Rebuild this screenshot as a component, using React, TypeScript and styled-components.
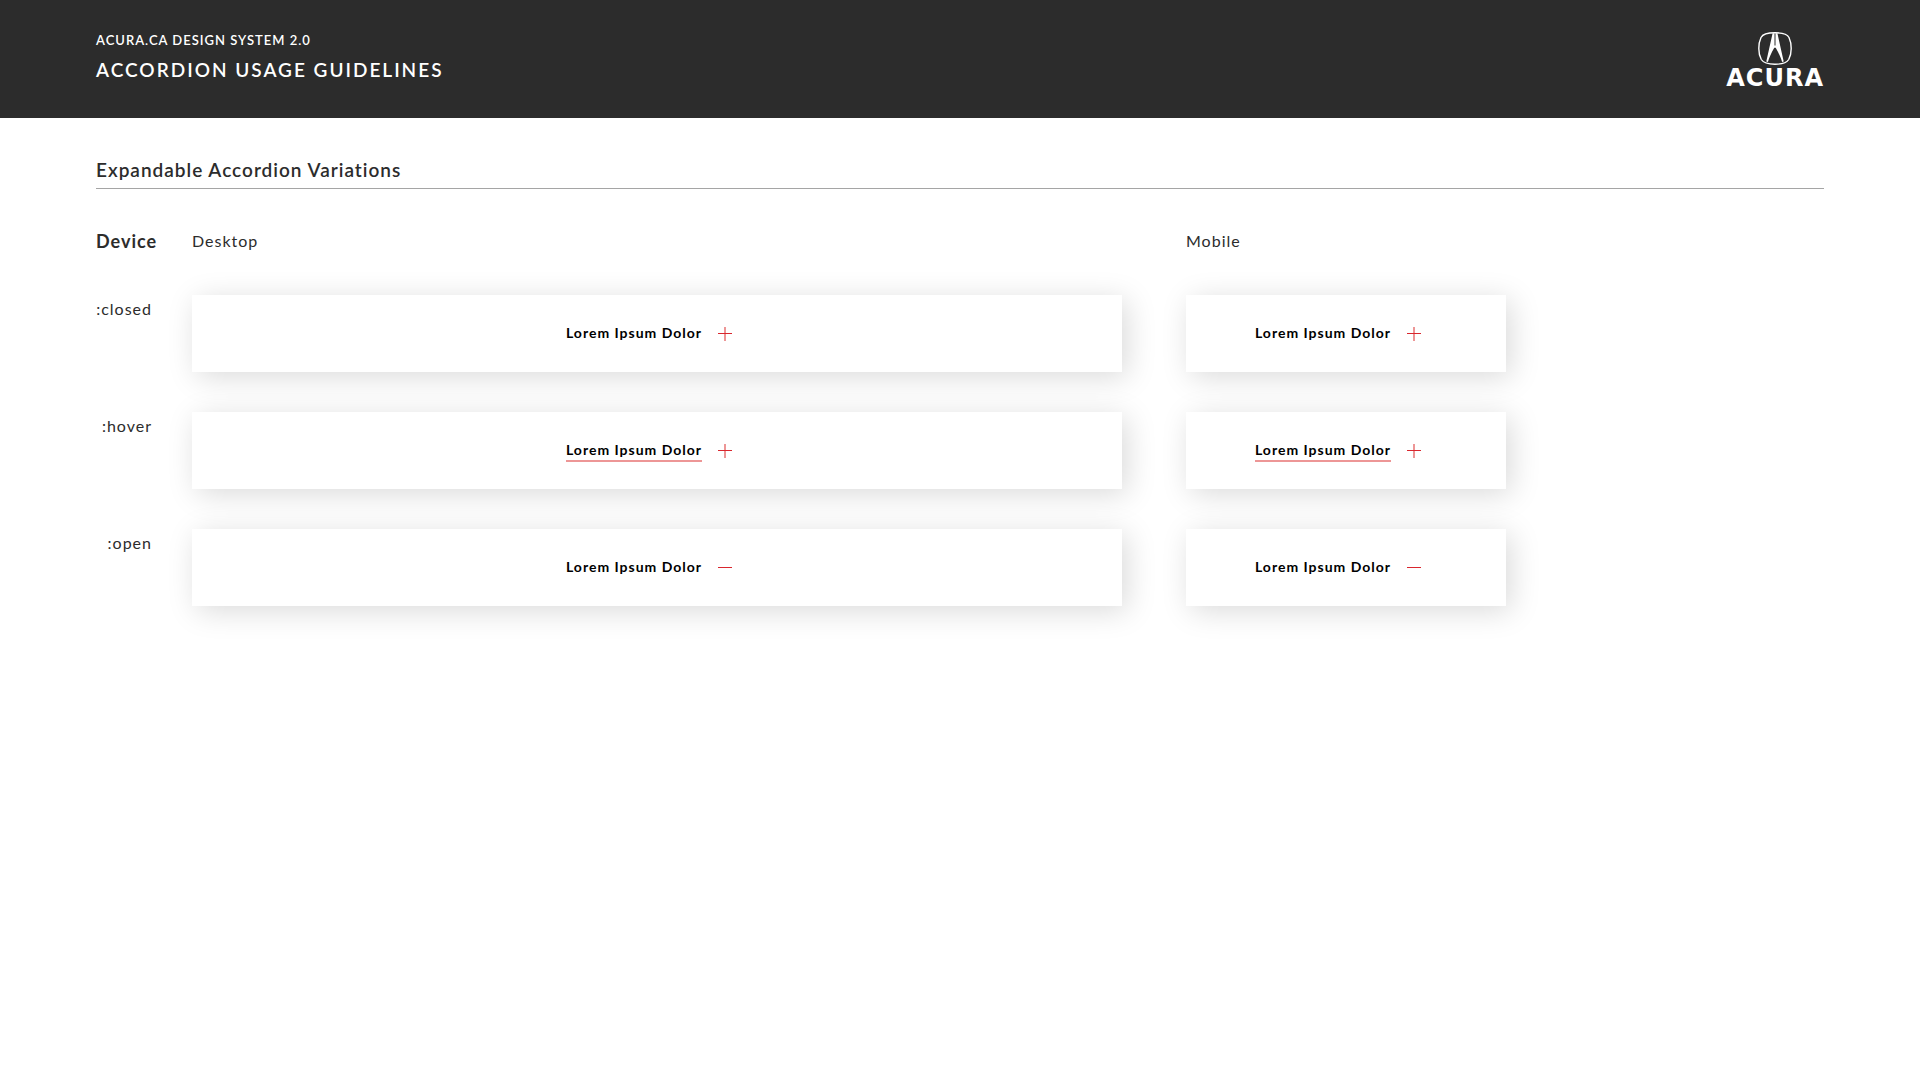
import React from "react";
import styled, { createGlobalStyle } from "styled-components";

const GlobalStyle = createGlobalStyle`
  * { box-sizing: border-box; }
  body {
    margin: 0;
    background: #fff;
    color: #2c2c2c;
    font-family: Lato, "Open Sans", sans-serif;
  }
  h1, h2, h3, p { margin: 0; }
`;

const Header = styled.header`
  display: flex;
  justify-content: space-between;
  align-items: flex-start;
  padding: 32px 96px 28px;
  background: #2c2c2c;
  color: #fff;
`;

const Titles = styled.div`
  display: flex;
  flex-direction: column;
  gap: 10px;
`;

const Eyebrow = styled.p`
  font-size: 13px;
  line-height: 16px;
  font-weight: 600;
  letter-spacing: 1px;
`;

const Title = styled.h1`
  font-size: 19px;
  line-height: 24px;
  font-weight: 600;
  letter-spacing: 2px;
`;

const Brand = styled.a`
  display: flex;
  flex-direction: column;
  align-items: center;
  color: #fff;
  text-decoration: none;
`;

const Emblem = styled.svg`
  display: block;
  width: 34px;
  height: 34px;
`;

const Wordmark = styled.span`
  font-family: "DejaVu Sans", sans-serif;
  font-size: 24px;
  line-height: 24px;
  font-weight: 700;
  letter-spacing: 1px;
`;

const Main = styled.main`
  padding: 40px 96px;
`;

const SectionTitle = styled.h2`
  padding-bottom: 6px;
  border-bottom: 1px solid #a5a5a5;
  font-size: 19px;
  line-height: 24px;
  font-weight: 600;
  letter-spacing: 1px;
`;

const Rows = styled.div`
  display: flex;
  flex-direction: column;
  gap: 40px;
  padding-top: 38px;
`;

const Row = styled.div`
  display: grid;
  grid-template-columns: 56px minmax(0, 1fr);
  column-gap: 40px;
`;

const Variants = styled.div`
  display: grid;
  grid-template-columns: minmax(0, 930px) 320px;
  column-gap: 64px;
`;

const DeviceHeading = styled.h3`
  font-size: 18px;
  line-height: 28px;
  font-weight: 700;
  letter-spacing: 1px;
`;

const Label = styled.p<{ $align?: "right" }>`
  font-size: 16px;
  line-height: 28px;
  letter-spacing: 1px;
  text-align: ${(p) => p.$align ?? "left"};
`;

const Card = styled.button`
  display: flex;
  align-items: center;
  justify-content: center;
  gap: 16px;
  height: 77px;
  padding: 0 16px 0 0;
  border: 0;
  background: #fff;
  color: #000;
  font: 700 14px/20px Lato, "Open Sans", sans-serif;
  letter-spacing: 1px;
  box-shadow: 5px 5px 30px rgba(0, 0, 0, 0.15);
  cursor: pointer;
`;

const CardText = styled.span<{ $underlined: boolean }>`
  border-bottom: 2px solid ${(p) => (p.$underlined ? "#ed9696" : "transparent")};
`;

const Sign = styled.svg`
  width: 14px;
  height: 14px;
`;

type State = "closed" | "hover" | "open";

const Accordion = ({ state }: { state: State }) => (
  <Card type="button" aria-expanded={state === "open"}>
    <CardText $underlined={state === "hover"}>Lorem Ipsum Dolor</CardText>
    <Sign viewBox="0 0 14 14" shapeRendering="crispEdges" aria-hidden="true">
      {state !== "open" && <path d="M6 0h2v14h-2z" fill="#ed9696" />}
      <path d="M0 6h14v1h-14z" fill="#d9272e" />
    </Sign>
  </Card>
);

const states: State[] = ["closed", "hover", "open"];

export default function App() {
  return (
    <>
      <GlobalStyle />
      <Header>
        <Titles>
          <Eyebrow>ACURA.CA DESIGN SYSTEM 2.0</Eyebrow>
          <Title>ACCORDION USAGE GUIDELINES</Title>
        </Titles>
        <Brand href="#">
          <Emblem viewBox="0 0 34 34" aria-hidden="true">
            <path
              d="M17 .8C24 .8 29 1.6 31 5.5c1.3 2.8 2.2 7 2.2 11s-.9 8.2-2.5 11C28.5 31 24 32.2 17 32.2S5.5 31 3.3 27.5C1.7 24.7.8 20.5.8 16.5s.9-8.2 2.2-11C5 1.6 10 .8 17 .8Z"
              fill="none"
              stroke="#fff"
              strokeWidth="1.4"
            />
            <path
              d="M14.6 1.2H16.5V13.4h1V1.2h1.9L25.7 29.6l-1.6.3C22.8 25.500 20.5 20.500 17.7 15.8h-1.4C13.5 20.5 11.2 25.5 9.9 29.9l-1.6-.3Z"
              fill="#fff"
            />
          </Emblem>
          <Wordmark>ACURA</Wordmark>
        </Brand>
      </Header>
      <Main>
        <SectionTitle>Expandable Accordion Variations</SectionTitle>
        <Rows>
          <Row>
            <DeviceHeading>Device</DeviceHeading>
            <Variants>
              <Label>Desktop</Label>
              <Label>Mobile</Label>
            </Variants>
          </Row>
          {states.map((state) => (
            <Row key={state}>
              <Label $align="right">:{state}</Label>
              <Variants>
                <Accordion state={state} />
                <Accordion state={state} />
              </Variants>
            </Row>
          ))}
        </Rows>
      </Main>
    </>
  );
}
